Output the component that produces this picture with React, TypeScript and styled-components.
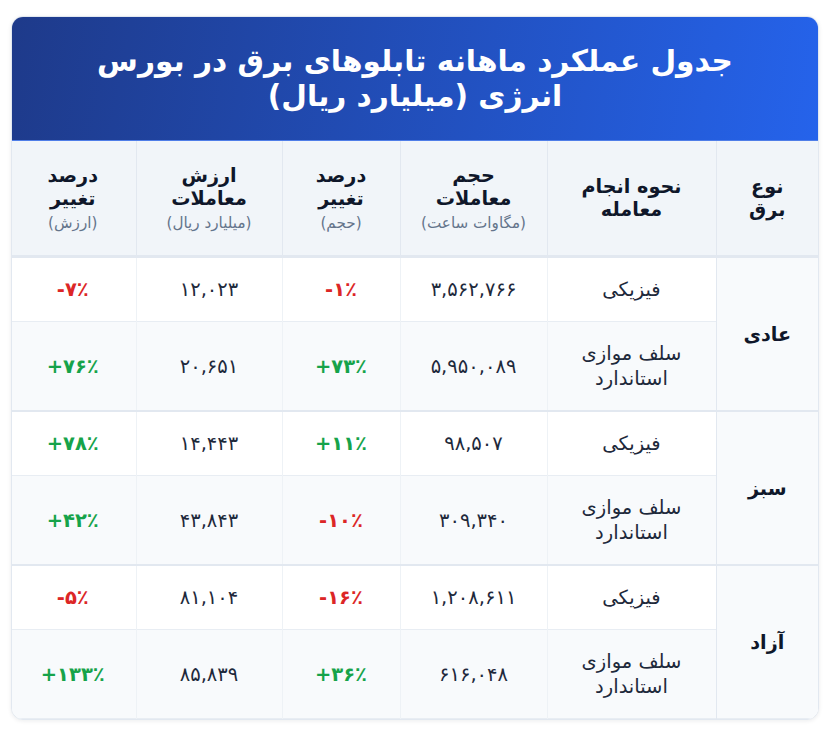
import React from "react";
import styled, { createGlobalStyle } from "styled-components";

const FONT = `"DejaVu Sans", "Noto Sans", sans-serif`;

const Global = createGlobalStyle`
  html, body { margin: 0; padding: 0; background: #ffffff; }
  body { font-family: ${FONT}; }
`;

const Page = styled.div`
  padding: 16px 14px 16px 11px;
  direction: rtl;
  font-family: ${FONT};
`;

const Card = styled.div`
  border: 1px solid #e2e8f0;
  border-radius: 12px;
  overflow: hidden;
  background: #ffffff;
  box-shadow: 0 1px 4px rgba(15, 23, 42, 0.08);
`;

const TitleBar = styled.div`
  background: linear-gradient(100deg, #1e3a8a 0%, #2563eb 100%);
  border-bottom: 1px solid #4f7ee8;
  padding: 27px 24px 26px;
  text-align: center;
`;

const Title = styled.h1`
  margin: 0;
  color: #ffffff;
  font-family: ${FONT};
  font-size: 29.6px;
  font-weight: 700;
  line-height: 35px;
`;

const Table = styled.table`
  width: 100%;
  border-collapse: collapse;
  table-layout: fixed;
  font-family: ${FONT};
`;

const HeadCell = styled.th`
  background: #f1f5f9;
  color: #0f172a;
  font-family: ${FONT};
  font-size: 19.2px;
  font-weight: 700;
  line-height: 23px;
  padding: 23px 6px;
  border-left: 1px solid #e2e8f0;
  border-bottom: 3px solid #e2e8f0;
  text-align: center;
  vertical-align: middle;
  &:last-child { border-left: none; }
`;

const Sub = styled.div`
  margin-top: 4px;
  font-size: 15.2px;
  font-weight: 400;
  line-height: 18px;
  color: #64748b;
`;

const Row = styled.tr<{ $alt?: boolean; $groupEnd?: boolean }>`
  background: ${(p) => (p.$alt ? "#f8fafc" : "#ffffff")};
  border-bottom: ${(p) => (p.$groupEnd ? "2px solid #e2e8f0" : "1px solid #e8edf3")};
`;

const GroupCell = styled.td`
  background: #f8fafc;
  color: #0f172a;
  font-family: ${FONT};
  font-size: 19.2px;
  font-weight: 700;
  text-align: center;
  vertical-align: middle;
  border-left: 1px solid #e2e8f0;
`;

const Cell = styled.td`
  color: #1e293b;
  font-family: ${FONT};
  font-size: 19.5px;
  line-height: 25px;
  padding: 19px 6px;
  text-align: center;
  vertical-align: middle;
  border-left: 1px solid #eef2f6;
  &:last-child { border-left: none; }
`;

const Change = styled(Cell)<{ $up: boolean }>`
  color: ${(p) => (p.$up ? "#16a34a" : "#dc2626")};
  font-weight: 700;
`;

type Line = {
  method: React.ReactNode;
  vol: string;
  volCh: string;
  val: string;
  valCh: string;
};

const SALAF = (
  <>
    سلف موازی
    <br />
    استاندارد
  </>
);

const groups: { name: string; lines: Line[] }[] = [
  {
    name: "عادی",
    lines: [
      { method: "فیزیکی", vol: "۳,۵۶۲,۷۶۶", volCh: "-۱٪", val: "۱۲,۰۲۳", valCh: "-۷٪" },
      { method: SALAF, vol: "۵,۹۵۰,۰۸۹", volCh: "+۷۳٪", val: "۲۰,۶۵۱", valCh: "+۷۶٪" },
    ],
  },
  {
    name: "سبز",
    lines: [
      { method: "فیزیکی", vol: "۹۸,۵۰۷", volCh: "+۱۱٪", val: "۱۴,۴۴۳", valCh: "+۷۸٪" },
      { method: SALAF, vol: "۳۰۹,۳۴۰", volCh: "-۱۰٪", val: "۴۳,۸۴۳", valCh: "+۴۲٪" },
    ],
  },
  {
    name: "آزاد",
    lines: [
      { method: "فیزیکی", vol: "۱,۲۰۸,۶۱۱", volCh: "-۱۶٪", val: "۸۱,۱۰۴", valCh: "-۵٪" },
      { method: SALAF, vol: "۶۱۶,۰۴۸", volCh: "+۳۶٪", val: "۸۵,۸۳۹", valCh: "+۱۳۳٪" },
    ],
  },
];

const widths = [102, 169, 147, 118, 146, 126];

const Ch = ({ v }: { v: string }) => (
  <Change $up={v.startsWith("+")}>
    <bdi dir="ltr">{v}</bdi>
  </Change>
);

export default function App() {
  return (
    <Page>
      <Global />
      <Card>
        <TitleBar>
          <Title>
            جدول عملکرد ماهانه تابلوهای برق در بورس
            <br />
            انرژی (میلیارد ریال)
          </Title>
        </TitleBar>
        <Table>
          <colgroup>
            {widths.map((w, i) => (
              <col key={i} style={{ width: w }} />
            ))}
          </colgroup>
          <thead>
            <tr>
              <HeadCell>
                نوع
                <br />
                برق
              </HeadCell>
              <HeadCell>
                نحوه انجام
                <br />
                معامله
              </HeadCell>
              <HeadCell>
                حجم
                <br />
                معاملات
                <Sub>(مگاوات ساعت)</Sub>
              </HeadCell>
              <HeadCell>
                درصد
                <br />
                تغییر
                <Sub>(حجم)</Sub>
              </HeadCell>
              <HeadCell>
                ارزش
                <br />
                معاملات
                <Sub>(میلیارد ریال)</Sub>
              </HeadCell>
              <HeadCell>
                درصد
                <br />
                تغییر
                <Sub>(ارزش)</Sub>
              </HeadCell>
            </tr>
          </thead>
          <tbody>
            {groups.map((g, gi) =>
              g.lines.map((l, li) => (
                <Row
                  key={`${gi}-${li}`}
                  $alt={li === 1}
                  $groupEnd={li === 1 && gi < groups.length - 1}
                >
                  {li === 0 && <GroupCell rowSpan={2}>{g.name}</GroupCell>}
                  <Cell>{l.method}</Cell>
                  <Cell>{l.vol}</Cell>
                  <Ch v={l.volCh} />
                  <Cell>{l.val}</Cell>
                  <Ch v={l.valCh} />
                </Row>
              ))
            )}
          </tbody>
        </Table>
      </Card>
    </Page>
  );
}
